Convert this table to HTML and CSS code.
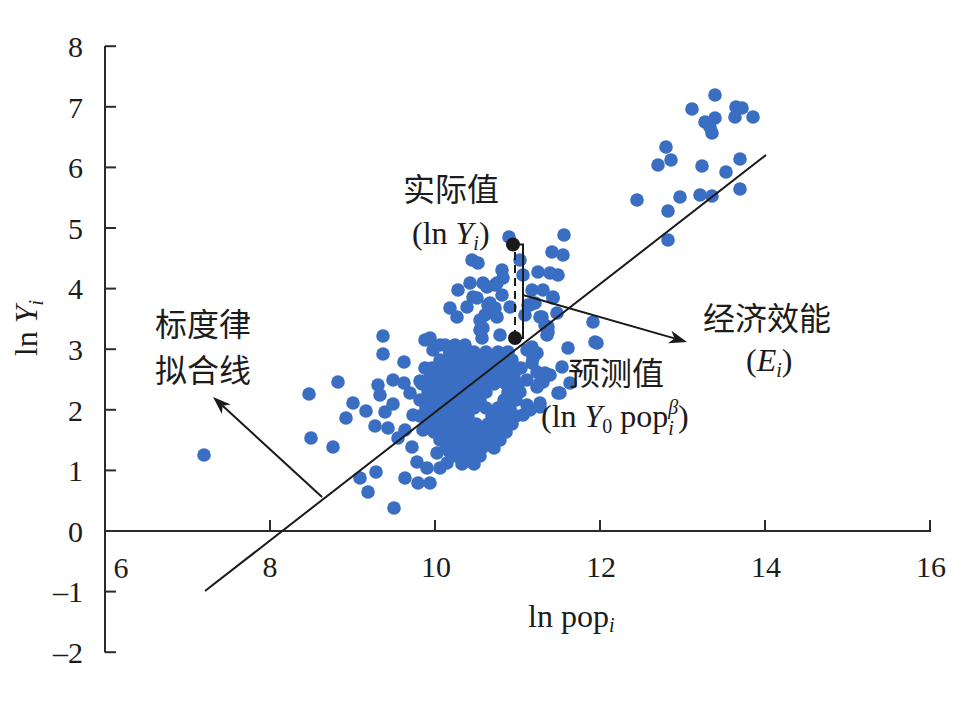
FILE: index.html
```html
<!DOCTYPE html>
<html lang="zh-CN">
<head>
<meta charset="utf-8">
<title>标度律拟合线</title>
<link rel="stylesheet" href="styles.css">
</head>
<body>
<div class="figure">
<svg class="chart" width="975" height="714" viewBox="0 0 975 714" xmlns="http://www.w3.org/2000/svg">
  <!-- dots -->
  <g class="dots">
    <circle cx="204" cy="455" r="6.8"/>
    <circle cx="309" cy="394" r="6.8"/><circle cx="311" cy="438" r="6.8"/><circle cx="333" cy="447" r="6.8"/><circle cx="338" cy="382" r="6.8"/>
    <circle cx="346" cy="418" r="6.8"/><circle cx="353" cy="403" r="6.8"/><circle cx="366" cy="411" r="6.8"/><circle cx="383" cy="336" r="6.8"/>
    <circle cx="383" cy="354" r="6.8"/><circle cx="404" cy="362" r="6.8"/><circle cx="378" cy="385" r="6.8"/><circle cx="380" cy="395" r="6.8"/>
    <circle cx="393" cy="380" r="6.8"/><circle cx="404" cy="383" r="6.8"/><circle cx="420" cy="381" r="6.8"/><circle cx="410" cy="393" r="6.8"/>
    <circle cx="385" cy="412" r="6.8"/><circle cx="393" cy="404" r="6.8"/><circle cx="375" cy="426" r="6.8"/><circle cx="388" cy="428" r="6.8"/>
    <circle cx="398" cy="438" r="6.8"/><circle cx="413" cy="415" r="6.8"/><circle cx="412" cy="447" r="6.8"/><circle cx="417" cy="462" r="6.8"/>
    <circle cx="376" cy="472" r="6.8"/><circle cx="360" cy="478" r="6.8"/><circle cx="368" cy="492" r="6.8"/><circle cx="394" cy="508" r="6.8"/>
    <circle cx="405" cy="478" r="6.8"/><circle cx="418" cy="483" r="6.8"/><circle cx="427" cy="468" r="6.8"/><circle cx="425" cy="340" r="6.8"/>
    <circle cx="433" cy="350" r="6.8"/><circle cx="432" cy="368" r="6.8"/><circle cx="433" cy="397" r="6.8"/><circle cx="428" cy="408" r="6.8"/>
    <circle cx="423" cy="430" r="6.8"/><circle cx="430" cy="420" r="6.8"/><circle cx="437" cy="433" r="6.8"/><circle cx="437" cy="453" r="6.8"/>
    <circle cx="430" cy="483" r="6.8"/><circle cx="405" cy="430" r="6.8"/><circle cx="440" cy="468" r="6.8"/><circle cx="447" cy="463" r="6.8"/>
    <circle cx="450" cy="452" r="6.8"/><circle cx="463" cy="452" r="6.8"/><circle cx="477" cy="447" r="6.8"/><circle cx="433" cy="373" r="6.8"/>
    <circle cx="568" cy="348" r="6.8"/><circle cx="597" cy="343" r="6.8"/><circle cx="547" cy="375" r="6.8"/><circle cx="543" cy="382" r="6.8"/>
    <circle cx="560" cy="393" r="6.8"/><circle cx="537" cy="387" r="6.8"/><circle cx="540" cy="407" r="6.8"/><circle cx="530" cy="410" r="6.8"/>
    <circle cx="553" cy="297" r="6.8"/><circle cx="593" cy="322" r="6.8"/><circle cx="527" cy="350" r="6.8"/><circle cx="533" cy="358" r="6.8"/>
    <circle cx="545" cy="325" r="6.8"/><circle cx="548" cy="332" r="6.8"/><circle cx="540" cy="317" r="6.8"/><circle cx="530" cy="305" r="6.8"/>
    <circle cx="550" cy="375" r="6.8"/><circle cx="540" cy="383" r="6.8"/><circle cx="527" cy="380" r="6.8"/><circle cx="570" cy="383" r="6.8"/>
    <circle cx="558" cy="393" r="6.8"/><circle cx="540" cy="403" r="6.8"/><circle cx="527" cy="405" r="6.8"/><circle cx="523" cy="415" r="6.8"/>
    <circle cx="509" cy="237" r="6.8"/><circle cx="564" cy="235" r="6.8"/><circle cx="552" cy="252" r="6.8"/><circle cx="563" cy="255" r="6.8"/>
    <circle cx="478" cy="263" r="6.8"/><circle cx="520" cy="260" r="6.8"/><circle cx="502" cy="270" r="6.8"/><circle cx="503" cy="278" r="6.8"/>
    <circle cx="538" cy="272" r="6.8"/><circle cx="550" cy="273" r="6.8"/><circle cx="558" cy="275" r="6.8"/><circle cx="523" cy="275" r="6.8"/>
    <circle cx="483" cy="283" r="6.8"/><circle cx="495" cy="285" r="6.8"/><circle cx="473" cy="297" r="6.8"/><circle cx="532" cy="290" r="6.8"/>
    <circle cx="543" cy="290" r="6.8"/><circle cx="553" cy="298" r="6.8"/><circle cx="502" cy="295" r="6.8"/><circle cx="488" cy="305" r="6.8"/>
    <circle cx="510" cy="307" r="6.8"/><circle cx="528" cy="305" r="6.8"/><circle cx="535" cy="303" r="6.8"/><circle cx="557" cy="313" r="6.8"/>
    <circle cx="485" cy="315" r="6.8"/><circle cx="497" cy="317" r="6.8"/><circle cx="525" cy="315" r="6.8"/><circle cx="542" cy="317" r="6.8"/>
    <circle cx="480" cy="330" r="6.8"/><circle cx="482" cy="338" r="6.8"/><circle cx="500" cy="335" r="6.8"/><circle cx="548" cy="327" r="6.8"/>
    <circle cx="547" cy="335" r="6.8"/><circle cx="595" cy="342" r="6.8"/><circle cx="532" cy="347" r="6.8"/><circle cx="537" cy="353" r="6.8"/>
    <circle cx="532" cy="363" r="6.8"/><circle cx="537" cy="372" r="6.8"/><circle cx="545" cy="373" r="6.8"/><circle cx="562" cy="367" r="6.8"/>
    <circle cx="472" cy="260" r="6.8"/><circle cx="458" cy="290" r="6.8"/><circle cx="470" cy="283" r="6.8"/><circle cx="487" cy="287" r="6.8"/>
    <circle cx="497" cy="283" r="6.8"/><circle cx="477" cy="298" r="6.8"/><circle cx="467" cy="307" r="6.8"/><circle cx="450" cy="308" r="6.8"/>
    <circle cx="490" cy="303" r="6.8"/><circle cx="495" cy="308" r="6.8"/><circle cx="480" cy="320" r="6.8"/><circle cx="457" cy="317" r="6.8"/>
    <circle cx="483" cy="328" r="6.8"/><circle cx="430" cy="338" r="6.8"/><circle cx="440" cy="345" r="6.8"/><circle cx="450" cy="353" r="6.8"/>
    <!-- dense core -->
    <circle cx="445" cy="345" r="6.8"/><circle cx="455" cy="345" r="6.8"/><circle cx="465" cy="345" r="6.8"/>
    <circle cx="450" cy="352" r="6.8"/><circle cx="462" cy="352" r="6.8"/><circle cx="474" cy="352" r="6.8"/><circle cx="486" cy="352" r="6.8"/><circle cx="498" cy="352" r="6.8"/><circle cx="508" cy="352" r="6.8"/>
    <circle cx="440" cy="360" r="6.8"/><circle cx="452" cy="360" r="6.8"/><circle cx="464" cy="360" r="6.8"/><circle cx="476" cy="360" r="6.8"/><circle cx="488" cy="360" r="6.8"/><circle cx="500" cy="360" r="6.8"/><circle cx="512" cy="360" r="6.8"/>
    <circle cx="425" cy="368" r="6.8"/><circle cx="437" cy="368" r="6.8"/><circle cx="449" cy="368" r="6.8"/><circle cx="461" cy="368" r="6.8"/><circle cx="473" cy="368" r="6.8"/><circle cx="485" cy="368" r="6.8"/><circle cx="497" cy="368" r="6.8"/><circle cx="509" cy="368" r="6.8"/><circle cx="521" cy="368" r="6.8"/>
    <circle cx="430" cy="376" r="6.8"/><circle cx="442" cy="376" r="6.8"/><circle cx="454" cy="376" r="6.8"/><circle cx="466" cy="376" r="6.8"/><circle cx="478" cy="376" r="6.8"/><circle cx="490" cy="376" r="6.8"/><circle cx="502" cy="376" r="6.8"/><circle cx="514" cy="376" r="6.8"/>
    <circle cx="422" cy="384" r="6.8"/><circle cx="434" cy="384" r="6.8"/><circle cx="446" cy="384" r="6.8"/><circle cx="458" cy="384" r="6.8"/><circle cx="470" cy="384" r="6.8"/><circle cx="482" cy="384" r="6.8"/><circle cx="494" cy="384" r="6.8"/><circle cx="506" cy="384" r="6.8"/><circle cx="518" cy="384" r="6.8"/>
    <circle cx="428" cy="392" r="6.8"/><circle cx="440" cy="392" r="6.8"/><circle cx="452" cy="392" r="6.8"/><circle cx="464" cy="392" r="6.8"/><circle cx="476" cy="392" r="6.8"/><circle cx="486" cy="392" r="6.8"/><circle cx="508" cy="392" r="6.8"/><circle cx="520" cy="392" r="6.8"/>
    <circle cx="420" cy="400" r="6.8"/><circle cx="432" cy="400" r="6.8"/><circle cx="444" cy="400" r="6.8"/><circle cx="456" cy="400" r="6.8"/><circle cx="468" cy="400" r="6.8"/><circle cx="480" cy="400" r="6.8"/><circle cx="504" cy="400" r="6.8"/><circle cx="516" cy="400" r="6.8"/>
    <circle cx="426" cy="408" r="6.8"/><circle cx="438" cy="408" r="6.8"/><circle cx="450" cy="408" r="6.8"/><circle cx="462" cy="408" r="6.8"/><circle cx="474" cy="408" r="6.8"/><circle cx="486" cy="408" r="6.8"/><circle cx="498" cy="408" r="6.8"/><circle cx="510" cy="408" r="6.8"/>
    <circle cx="420" cy="416" r="6.8"/><circle cx="432" cy="416" r="6.8"/><circle cx="444" cy="416" r="6.8"/><circle cx="456" cy="416" r="6.8"/><circle cx="468" cy="416" r="6.8"/><circle cx="492" cy="416" r="6.8"/><circle cx="504" cy="416" r="6.8"/><circle cx="516" cy="416" r="6.8"/>
    <circle cx="428" cy="424" r="6.8"/><circle cx="440" cy="424" r="6.8"/><circle cx="452" cy="424" r="6.8"/><circle cx="464" cy="424" r="6.8"/><circle cx="476" cy="424" r="6.8"/><circle cx="488" cy="424" r="6.8"/><circle cx="500" cy="424" r="6.8"/><circle cx="512" cy="424" r="6.8"/>
    <circle cx="434" cy="432" r="6.8"/><circle cx="446" cy="432" r="6.8"/><circle cx="458" cy="432" r="6.8"/><circle cx="470" cy="432" r="6.8"/><circle cx="482" cy="432" r="6.8"/><circle cx="494" cy="432" r="6.8"/><circle cx="506" cy="432" r="6.8"/>
    <circle cx="440" cy="440" r="6.8"/><circle cx="452" cy="440" r="6.8"/><circle cx="464" cy="440" r="6.8"/><circle cx="476" cy="440" r="6.8"/><circle cx="488" cy="440" r="6.8"/><circle cx="500" cy="440" r="6.8"/>
    <circle cx="446" cy="448" r="6.8"/><circle cx="458" cy="448" r="6.8"/><circle cx="470" cy="448" r="6.8"/><circle cx="482" cy="448" r="6.8"/><circle cx="494" cy="448" r="6.8"/>
    <circle cx="456" cy="456" r="6.8"/><circle cx="468" cy="456" r="6.8"/><circle cx="480" cy="456" r="6.8"/>
    <circle cx="462" cy="464" r="6.8"/><circle cx="474" cy="464" r="6.8"/>
    <!-- upper right -->
    <circle cx="715" cy="95" r="6.8"/><circle cx="692" cy="109" r="6.8"/><circle cx="736" cy="107" r="6.8"/><circle cx="742" cy="108" r="6.8"/>
    <circle cx="753" cy="117" r="6.8"/><circle cx="735" cy="117" r="6.8"/><circle cx="705" cy="122" r="6.8"/><circle cx="715" cy="118" r="6.8"/>
    <circle cx="710" cy="127" r="6.8"/><circle cx="712" cy="133" r="6.8"/><circle cx="666" cy="147" r="6.8"/><circle cx="658" cy="165" r="6.8"/>
    <circle cx="671" cy="160" r="6.8"/><circle cx="702" cy="166" r="6.8"/><circle cx="740" cy="159" r="6.8"/><circle cx="726" cy="172" r="6.8"/>
    <circle cx="740" cy="189" r="6.8"/><circle cx="637" cy="200" r="6.8"/><circle cx="680" cy="197" r="6.8"/><circle cx="700" cy="195" r="6.8"/>
    <circle cx="712" cy="196" r="6.8"/><circle cx="668" cy="211" r="6.8"/><circle cx="668" cy="240" r="6.8"/>
  </g>

  <!-- axes -->
  <g class="axis">
    <line x1="105" y1="46" x2="105" y2="652.5"/>
    <line x1="104" y1="531" x2="931" y2="531"/>
    <line x1="105" y1="46.2" x2="116" y2="46.2"/>
    <line x1="105" y1="106.8" x2="116" y2="106.8"/>
    <line x1="105" y1="167.4" x2="116" y2="167.4"/>
    <line x1="105" y1="228" x2="116" y2="228"/>
    <line x1="105" y1="288.6" x2="116" y2="288.6"/>
    <line x1="105" y1="349.2" x2="116" y2="349.2"/>
    <line x1="105" y1="409.8" x2="116" y2="409.8"/>
    <line x1="105" y1="470.4" x2="116" y2="470.4"/>
    <line x1="105" y1="591.6" x2="116" y2="591.6"/>
    <line x1="105" y1="652.2" x2="116" y2="652.2"/>
    <line x1="270" y1="531" x2="270" y2="520"/>
    <line x1="435" y1="531" x2="435" y2="520"/>
    <line x1="600" y1="531" x2="600" y2="520"/>
    <line x1="765" y1="531" x2="765" y2="520"/>
    <line x1="930" y1="531" x2="930" y2="520"/>
  </g>

  <!-- tick labels -->
  <g class="tick ytick">
    <text x="83" y="57">8</text>
    <text x="83" y="117.5">7</text>
    <text x="83" y="178">6</text>
    <text x="83" y="238.5">5</text>
    <text x="83" y="299">4</text>
    <text x="83" y="360">3</text>
    <text x="83" y="420.5">2</text>
    <text x="83" y="481">1</text>
    <text x="83" y="542">0</text>
    <text x="83" y="602">–1</text>
    <text x="83" y="663">–2</text>
  </g>
  <g class="tick xtick">
    <text x="121" y="578">6</text>
    <text x="270" y="577">8</text>
    <text x="436" y="577">10</text>
    <text x="601" y="577">12</text>
    <text x="766" y="577">14</text>
    <text x="931" y="577">16</text>
  </g>

  <!-- axis titles -->
  <text class="title" x="528" y="627">ln pop<tspan class="sub it" dy="5">i</tspan></text>
  <text class="title mid" x="0" y="0" transform="translate(37 328) rotate(-90)">ln <tspan class="it">Y</tspan><tspan class="sub it" dy="6">i</tspan></text>

  <!-- fitted line -->
  <line class="fit" x1="205" y1="591" x2="766" y2="155"/>

  <!-- residual bracket -->
  <line class="dash" x1="515" y1="252" x2="515" y2="333"/>
  <polyline class="thin" points="514,244.5 523,244.5 523,338 515,338"/>
  <circle class="pt" cx="513" cy="244.5" r="7"/>
  <circle class="pt" cx="515" cy="338" r="7"/>

  <!-- arrows -->
  <line class="thin" x1="523" y1="295" x2="674.5" y2="338.4"/>
  <polygon class="head" points="687,342 671.5,330.8 674.5,338.4 667.9,343.3"/>
  <line class="thin" x1="322" y1="497" x2="222.6" y2="405.8"/>
  <polygon class="head" points="213,397 230.7,404.4 222.6,405.8 221.9,414"/>

  <!-- annotations -->
  <text class="cn" x="403" y="201">实际值</text>
  <text class="lab" x="412" y="244">(ln <tspan class="it">Y</tspan><tspan class="sub it" dy="6">i</tspan><tspan dy="-6">)</tspan></text>
  <text class="cn" x="155" y="336">标度律</text>
  <text class="cn" x="155" y="382">拟合线</text>
  <text class="cn" x="703" y="330">经济效能</text>
  <text class="lab" x="746" y="371">(<tspan class="it">E</tspan><tspan class="sub it" dy="6">i</tspan><tspan dy="-6">)</tspan></text>
  <text class="cn" x="568" y="385">预测值</text>
  <text class="lab" x="541" y="427">(ln <tspan class="it">Y</tspan><tspan class="sub" dy="6">0</tspan><tspan dy="-6"> pop</tspan><tspan class="sub it" dy="-13">β</tspan><tspan class="sub it" dx="-10" dy="21">i</tspan><tspan dx="4" dy="-8">)</tspan></text>
</svg>
</div>
</body>
</html>
```
FILE: styles.css
```css
html, body {
  margin: 0;
  padding: 0;
  background: #ffffff;
}

.figure {
  width: 975px;
  height: 714px;
  overflow: hidden;
}

.chart {
  display: block;
}

.dots circle {
  fill: #3a6ec3;
}

.axis line {
  stroke: #2b2b2b;
  stroke-width: 2;
}

.tick text {
  font-family: "Liberation Serif", "Times New Roman", serif;
  font-size: 30px;
  fill: #1c1c1c;
}

.ytick text {
  text-anchor: end;
}

.xtick text {
  text-anchor: middle;
}

.title,
.lab {
  font-family: "Liberation Serif", "Times New Roman", serif;
  font-size: 32px;
  fill: #1c1c1c;
}

.mid {
  text-anchor: middle;
}

.it {
  font-style: italic;
}

.sub {
  font-size: 20px;
}

.cn {
  font-family: "Liberation Serif", "Noto Sans CJK SC", serif;
  font-size: 32px;
  fill: #1c1c1c;
}

.fit {
  stroke: #1a1a1a;
  stroke-width: 2;
}

.thin {
  stroke: #1a1a1a;
  stroke-width: 2;
  fill: none;
}

.dash {
  stroke: #1a1a1a;
  stroke-width: 2;
  stroke-dasharray: 8 5;
}

.pt {
  fill: #1a1a1a;
}

.head {
  fill: #1a1a1a;
}
```
